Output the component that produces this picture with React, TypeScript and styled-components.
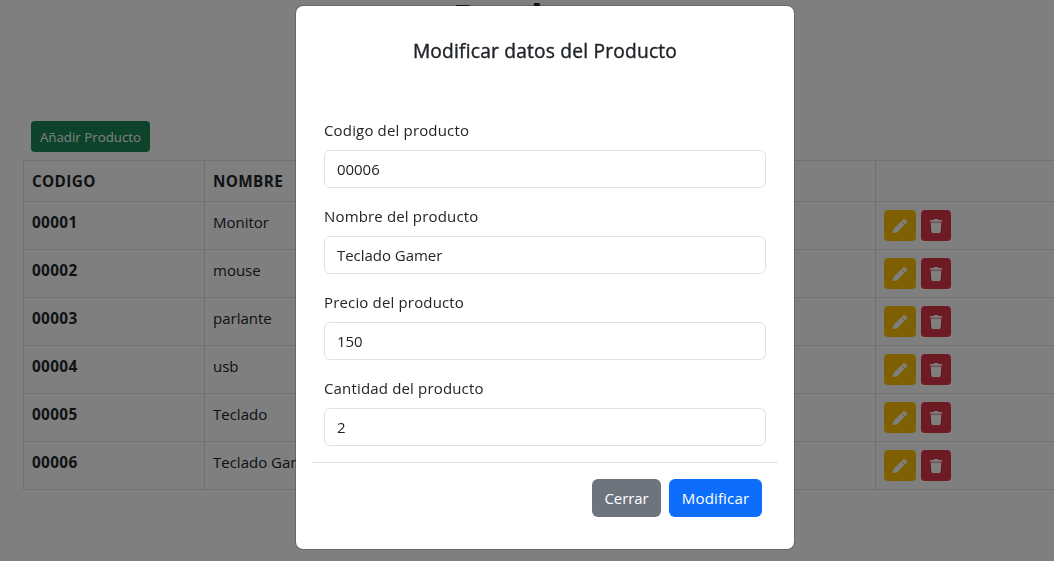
import React from 'react';
import styled, { createGlobalStyle } from 'styled-components';
import { FaPen, FaTrash } from 'react-icons/fa';

const GlobalStyle = createGlobalStyle`
  *, *::before, *::after { box-sizing: border-box; }
  body {
    margin: 0;
    overflow: hidden;
    background: #fff;
    color: #212529;
    font-family: 'Segoe UI', 'Open Sans', 'Noto Sans', sans-serif;
    font-size: 15px;
    line-height: 24px;
  }
  input, button { font: inherit; }
`;

const Page = styled.main`
  height: 561px;
  width: 1054px;
  overflow: hidden;
  display: flex;
  flex-direction: column;
`;

const Heading = styled.h1`
  margin: -6px 0 0;
  padding-left: 46px;
  height: 127px;
  text-align: center;
  font-size: 38.5px;
  font-weight: 700;
  line-height: 48px;
`;

const AddButton = styled.button`
  align-self: flex-start;
  flex: none;
  width: 119px;
  height: 31px;
  margin: 0 0 8px 31px;
  padding: 1px 0 0;
  border: 0;
  border-radius: 4px;
  background: #198754;
  color: #fff;
  font-size: 13.3px;
  line-height: 21px;
  white-space: nowrap;
`;

const Table = styled.table`
  width: 1100px;
  margin-left: 23px;
  table-layout: fixed;
  border-collapse: collapse;
  flex: none;

  th, td {
    padding: 8px;
    border: 1px solid #dee2e6;
    text-align: left;
    vertical-align: top;
    white-space: nowrap;
  }
`;

const HeadRow = styled.tr`
  height: 41px;
`;

const BodyRow = styled.tr`
  height: 48px;
`;

const Code = styled.th`
  font-size: 15.3px;
  letter-spacing: 0.35px;
`;

const Actions = styled.div`
  display: flex;
  gap: 5px;
`;

const IconButton = styled.button<{ $kind: 'edit' | 'remove' }>`
  display: flex;
  align-items: center;
  justify-content: center;
  width: ${({ $kind }) => ($kind === 'edit' ? 32 : 30)}px;
  height: 31px;
  padding: 0;
  border: 0;
  border-radius: 4px;
  background: ${({ $kind }) => ($kind === 'edit' ? '#ffc107' : '#dc3545')};
  color: #fff;
  font-size: 14px;
`;

const Backdrop = styled.div`
  position: fixed;
  inset: 0;
  background: rgba(0, 0, 0, 0.5);
  display: flex;
  justify-content: center;
  align-items: flex-start;
  padding: 5px 0 0 36px;
`;

const Dialog = styled.section`
  width: 500px;
  height: 545px;
  padding: 16px;
  border: 1px solid rgba(0, 0, 0, 0.175);
  border-radius: 8px;
  background: #fff;
  background-clip: padding-box;
`;

const DialogTitle = styled.h5`
  margin: 14px 0 52px;
  text-align: center;
  font-size: 19.2px;
  font-weight: 500;
  letter-spacing: 0.2px;
  -webkit-text-stroke: 0.4px #212529;
  line-height: 30px;
`;

const Fields = styled.form`
  display: flex;
  flex-direction: column;
  gap: 16px;
  padding: 0 12px 16px;
`;

const Field = styled.label`
  display: flex;
  flex-direction: column;
  gap: 8px;
  letter-spacing: 0.16px;
`;

const Input = styled.input`
  height: 38px;
  width: 100%;
  padding: 6px 12px;
  border: 1px solid #dee2e6;
  border-radius: 6px;
  background: #fff;
  color: #212529;
  letter-spacing: -0.04px;
  outline: none;
`;

const Footer = styled.footer`
  display: flex;
  justify-content: flex-end;
  gap: 8px;
  padding: 16px;
  border-top: 1px solid #dee2e6;
`;

const FooterButton = styled.button<{ $primary?: boolean }>`
  width: ${({ $primary }) => ($primary ? 93 : 69)}px;
  height: 38px;
  padding: 0;
  border: 0;
  border-radius: 6px;
  background: ${({ $primary }) => ($primary ? '#0d6efd' : '#6c757d')};
  color: #fff;
  letter-spacing: ${({ $primary }) => ($primary ? 0.15 : -0.1)}px;
`;

const products = [
  ['00001', 'Monitor'],
  ['00002', 'mouse'],
  ['00003', 'parlante'],
  ['00004', 'usb'],
  ['00005', 'Teclado'],
  ['00006', 'Teclado Gamer'],
];

const fields = [
  ['Codigo del producto', '00006'],
  ['Nombre del producto', 'Teclado Gamer'],
  ['Precio del producto', '150'],
  ['Cantidad del producto', '2'],
];

export default function App() {
  return (
    <>
      <GlobalStyle />
      <Page>
        <Heading>Productos</Heading>
        <AddButton>Añadir Producto</AddButton>
        <Table>
          <colgroup>
            <col style={{ width: 181 }} />
            <col style={{ width: 671 }} />
            <col />
          </colgroup>
          <thead>
            <HeadRow>
              <Code>CODIGO</Code>
              <Code>NOMBRE</Code>
              <th />
            </HeadRow>
          </thead>
          <tbody>
            {products.map(([code, name]) => (
              <BodyRow key={code}>
                <Code>{code}</Code>
                <td>{name}</td>
                <td>
                  <Actions>
                    <IconButton $kind="edit" aria-label="Editar"><FaPen /></IconButton>
                    <IconButton $kind="remove" aria-label="Eliminar"><FaTrash /></IconButton>
                  </Actions>
                </td>
              </BodyRow>
            ))}
          </tbody>
        </Table>
      </Page>
      <Backdrop>
        <Dialog role="dialog" aria-modal="true">
          <DialogTitle>Modificar datos del Producto</DialogTitle>
          <Fields>
            {fields.map(([label, value]) => (
              <Field key={label}>
                {label}
                <Input defaultValue={value} />
              </Field>
            ))}
          </Fields>
          <Footer>
            <FooterButton>Cerrar</FooterButton>
            <FooterButton $primary>Modificar</FooterButton>
          </Footer>
        </Dialog>
      </Backdrop>
    </>
  );
}
